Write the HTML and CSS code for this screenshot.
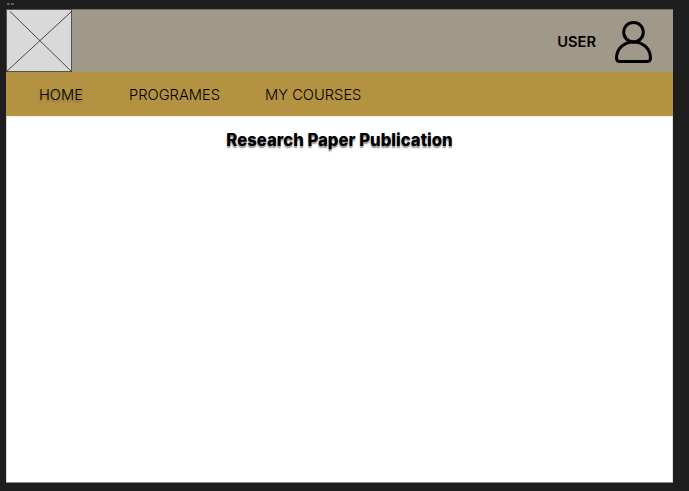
FILE: index.html
```html
<!DOCTYPE html>
<html lang="en">
<head>
<meta charset="utf-8">
<title>Research Paper Publication</title>
<link rel="stylesheet" href="styles.css">
</head>
<body>
<div class="frame-label"><i></i><i></i></div>
<div class="frame">
  <header class="banner">
    <svg class="logo" viewBox="0 0 66 63" aria-hidden="true">
      <rect x=".5" y=".5" width="65" height="62" fill="#d9d9d9" stroke="#55534d"/>
      <path d="M4 2.5 65.5 62.5M65.5 2.5.5 62.5" fill="none" stroke="#222" stroke-width=".8"/>
    </svg>
    <div class="account">
      <span class="user">USER</span>
      <svg class="avatar" viewBox="0 0 38 43" aria-hidden="true">
        <circle cx="18.5" cy="11.2" r="9.8"/>
        <path d="M18.5 20.9C8.5 20.9 1.5 28.2 1.5 37Q1.5 40.5 5 40.5H32Q35.5 40.5 35.5 37C35.5 28.2 28.5 20.9 18.5 20.9Z"/>
      </svg>
    </div>
  </header>
  <nav class="menu">
    <a class="home">HOME</a>
    <a class="programs">PROGRAMES</a>
    <a class="courses">MY COURSES</a>
  </nav>
  <main><h1>Research Paper Publication</h1></main>
</div>
</body>
</html>
```
FILE: styles.css
```css
* { box-sizing: border-box; }
body {
  margin: 0;
  height: 491px;
  padding: 0 16px 8px 6px;
  display: flex;
  flex-direction: column;
  overflow: hidden;
  background: #1e1e1e;
  color: #000;
  font-family: Inter, "Liberation Sans", sans-serif;
}
.frame-label { height: 9px; padding: 3px 0 0 1px; display: flex; gap: 1px; }
.frame-label i { width: 3px; height: 2px; background: #5c5c5c; }
.frame {
  flex: 1;
  display: flex;
  flex-direction: column;
  background: #fff;
  border-bottom: 1px solid #8b8b8b;
}
.banner {
  height: 63px;
  display: flex;
  justify-content: space-between;
  background: #a09889;
  box-shadow: inset 0 1px #777166;
}
.logo { width: 66px; height: 63px; }
.account { display: flex; align-items: center; gap: 19px; padding: 3px 20px 0 0; }
.user { font-size: 14.7px; line-height: 20px; font-weight: 600; }
.avatar { width: 38px; height: 43px; fill: none; stroke: #000; stroke-width: 3; overflow: visible; }
.menu {
  height: 44px;
  display: flex;
  align-items: center;
  padding: 2px 0 0 33px;
  background: #b39241;
  font-size: 14.7px;
  font-weight: 300;
}
.home { width: 90px; text-shadow: 0 2px 2px rgba(0, 0, 0, .25); }
.programs { width: 136px; }
main { flex: 1; border-top: 1px solid #f5efdf; border-right: 1px solid #e1e1e1; border-left: 1px solid #d5d5d5; }
h1 {
  margin: 11px 0 0;
  text-align: center;
  font-size: 16.7px;
  line-height: 24px;
  font-weight: 800;
  text-shadow: 0 2px 1.5px rgba(0, 0, 0, .45);
}
```
